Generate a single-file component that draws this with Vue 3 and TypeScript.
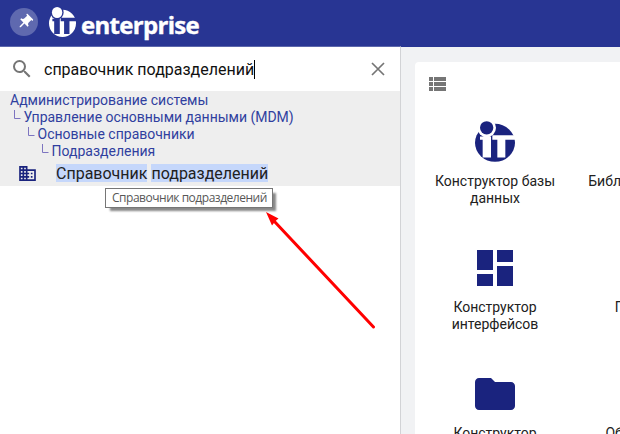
<script setup lang="ts">
interface Crumb { text: string; level: number }
interface Tile { lines: string[]; icon: 'logo' | 'dashboard' | 'folder' | 'none' }

const query = 'справочник подразделений'
const crumbs: Crumb[] = [
  { text: 'Администрирование системы', level: 0 },
  { text: 'Управление основными данными (MDM)', level: 1 },
  { text: 'Основные справочники', level: 2 },
  { text: 'Подразделения', level: 3 },
]
const matches = ['Справочник', 'подразделений']
const tiles: Tile[] = [
  { lines: ['Конструктор базы', 'данных'], icon: 'logo' },
  { lines: ['Библиотека'], icon: 'none' },
  { lines: ['Конструктор', 'интерфейсов'], icon: 'dashboard' },
  { lines: ['Пул'], icon: 'none' },
  { lines: ['Конструктор'], icon: 'folder' },
  { lines: ['Обмен'], icon: 'none' },
]
</script>

<template>
  <div class="app">
    <header class="header">
      <button class="pin" aria-label="pin">
        <svg viewBox="0 0 24 24"><path transform="rotate(45 12 12)" d="M16 9V4h1c.55 0 1-.45 1-1s-.45-1-1-1H7c-.55 0-1 .45-1 1s.45 1 1 1h1v5c0 1.660-1.340 3-3 3v2h5.970v7l1 1 1-1v-7H19v-2c-1.660 0-3-1.340-3-3z" /></svg>
      </button>
      <svg class="brand-logo" viewBox="30 31 120 125" preserveAspectRatio="none">
        <ellipse cx="90" cy="99" rx="60" ry="57" class="logo-fill" />
        <circle cx="66" cy="54" r="29" class="logo-cut" />
        <path d="M45 80H78V143H53V90H45ZM82 76H152V90H121V143H97V90H82Z" class="logo-cut" />
        <circle cx="66" cy="54" r="23" class="logo-fill" />
      </svg>
      <span class="wordmark">enterprise</span>
    </header>

    <main class="body">
      <aside class="panel">
        <div class="search">
          <svg class="glass" viewBox="3 3 18 18"><path d="M15.500 14h-.79l-.28-.27A6.470 6.470 0 0 0 16 9.500 6.500 6.500 0 1 0 9.500 16c1.610 0 3.090-.59 4.230-1.570l.27.28v.79l5 4.990L20.490 19l-4.990-5zm-6 0C7.010 14 5 11.990 5 9.500S7.010 5 9.500 5 14 7.010 14 9.500 11.990 14 9.500 14z" /></svg>
          <span class="query">{{ query }}</span><i class="caret"></i>
          <svg class="close" viewBox="0 0 14 14"><path d="M1 1L13 13M13 1L1 13" /></svg>
        </div>
        <div class="results">
          <div v-for="c in crumbs" :key="c.text" class="crumb" :class="'level-' + c.level">
            <svg v-if="c.level" class="elbow" viewBox="0 0 7 10"><path d="M.5 0V8.500H6.500" /></svg>
            <span>{{ c.text }}</span>
          </div>
          <div class="match">
            <svg class="building" viewBox="2 3 20 18"><path d="M12 7V3H2v18h20V7H12zM6 19H4v-2h2v2zm0-4H4v-2h2v2zm0-4H4V9h2v2zm0-4H4V5h2v2zm4 12H8v-2h2v2zm0-4H8v-2h2v2zm0-4H8V9h2v2zm0-4H8V5h2v2zm10 12h-8v-2h2v-2h-2v-2h2v-2h-2V9h8v10zm-2-8h-2v2h2v-2zm0 4h-2v2h2v-2z" /></svg>
            <mark v-for="m in matches" :key="m">{{ m }}</mark>
          </div>
        </div>
      </aside>

      <section class="workspace">
        <div class="card">
          <svg class="list" viewBox="0 0 17 14"><path d="M0 0H4V4H0ZM5 0H17V4H5ZM0 5H4V9H0ZM5 5H17V9H5ZM0 10H4V14H0ZM5 10H17V14H5Z" /></svg>
          <div class="grid">
            <div v-for="(t, i) in tiles" :key="i" class="tile">
              <div class="tile-icon">
                <svg v-if="t.icon === 'logo'" class="tile-logo" viewBox="30 34 120 122">
                  <ellipse cx="90" cy="99" rx="60" ry="57" class="logo-fill" />
                  <circle cx="65" cy="54" r="28" class="logo-cut" />
                  <path d="M45 80H78V143H53V90H45ZM82 76H152V90H121V143H97V90H82Z" class="logo-cut" />
                  <circle cx="65" cy="54" r="20" class="logo-fill" />
                </svg>
                <svg v-else-if="t.icon === 'dashboard'" class="tile-svg" viewBox="0 0 24 24"><path d="M3 13h8V3H3v10zm0 8h8v-6H3v6zm10 0h8V11h-8v10zm0-18v6h8V3h-8z" /></svg>
                <svg v-else-if="t.icon === 'folder'" class="tile-svg" viewBox="0 0 24 24"><path d="M10 4H4c-1.100 0-1.990.9-1.990 2L2 18c0 1.100.9 2 2 2h16c1.100 0 2-.9 2-2V8c0-1.100-.9-2-2-2h-8l-2-2z" /></svg>
              </div>
              <div v-for="l in t.lines" :key="l" class="label">{{ l }}</div>
            </div>
          </div>
        </div>
      </section>
    </main>

    <div class="tooltip">Справочник подразделений</div>
    <svg class="arrow" viewBox="0 0 112 122">
      <path class="shaft" d="M8 9L107.500 115" />
      <path class="head" d="M0 0L12.500 6.500L9.500 9L6 13.500Z" />
    </svg>
  </div>
</template>

<style>
body { overflow: hidden; }
</style>

<style scoped>
* { box-sizing: border-box; }
.app { position: relative; width: 620px; height: 434px; overflow: hidden; display: flex; flex-direction: column; font-family: Roboto, "Liberation Sans", sans-serif; background: #fff; }
.header { height: 46px; flex: none; background: #283593; display: flex; align-items: flex-start; }
.pin { width: 28px; height: 28px; margin: 8px 0 0 10px; padding: 0 0 1px 1px; border: 0; border-radius: 50%; background: #5f69af; display: flex; align-items: center; justify-content: center; }
.pin svg { width: 18px; height: 18px; fill: #fff; }
.brand-logo { width: 27px; height: 30px; margin: 7px 0 0 11px; }
.brand-logo .logo-fill { fill: #fff; }
.brand-logo .logo-cut { fill: #283593; }
.wordmark { margin: 9px 0 0 5px; font: 700 24px/32px "Open Sans", "Noto Sans", sans-serif; letter-spacing: -0.7px; color: #fff; -webkit-text-stroke: 0.4px #fff; }
.body { flex: 1; min-height: 0; display: flex; }
.panel { width: 401px; flex: none; background: #fff; border-top: 1px solid #5c67ab; border-right: 1px solid #d2d3d6; }
.search { height: 44px; display: flex; align-items: center; padding-left: 13px; }
.glass { width: 18px; height: 18px; fill: #757575; }
.query { margin-left: 13px; padding-top: 2px; font-size: 16px; line-height: 20px; white-space: nowrap; color: #111; }
.caret { width: 1px; height: 19px; background: #000; }
.close { width: 14px; height: 14px; margin-left: auto; margin-right: 15px; fill: none; stroke: #757575; stroke-width: 1.7; }
.results { height: 95px; background: #eee; padding-top: 1px; }
.crumb { height: 17px; display: flex; padding-left: 10px; font-size: 14px; line-height: 17px; white-space: nowrap; color: #303f9f; }
.level-1 { padding-left: 14px; letter-spacing: -0.02px; }
.level-2 { padding-left: 28px; }
.level-3 { padding-left: 42px; }
.elbow { width: 7px; height: 10px; margin: 1px 2.5px 0 0; fill: none; stroke: #7d74c0; }
.match { height: 26px; display: flex; align-items: center; padding-left: 19px; gap: 4px; font-size: 16px; }
.building { width: 17px; height: 15px; fill: #1a237e; margin-right: 16px; }
mark { background: #c5d7fb; color: #212121; line-height: 19px; height: 18px; }
.workspace { flex: 1; min-width: 0; background: #f1f2f4; border-top: 1px solid #283593; padding: 15px 0 0 14px; overflow: hidden; }
.card { width: 600px; height: 500px; background: #fff; border-radius: 4px 0 0 0; padding: 15px 0 0 14px; }
.list { display: block; width: 17px; height: 14px; fill: #757575; }
.grid { display: grid; grid-template-columns: 132px 132px; grid-auto-rows: 126px; margin-top: 27px; }
.tile { display: flex; flex-direction: column; align-items: center; }
.tile-icon { height: 55px; flex: none; display: flex; }
.tile-logo { width: 40px; height: 41px; margin-top: 3px; }
.tile-svg { width: 48px; height: 48px; fill: #1a237e; }
.logo-fill { fill: #1a237e; }
.logo-cut { fill: #fff; }
.label { font-size: 14px; line-height: 17px; white-space: nowrap; color: #212121; }
.tooltip { position: absolute; left: 105px; top: 188px; width: 168px; height: 20px; border: 1px solid #767676; background: #fff; color: #575757; font: 12px/18px "Open Sans", "Noto Sans", sans-serif; letter-spacing: -0.48px; padding-left: 6px; white-space: nowrap; box-shadow: 4px 4px 2px -1px #888; }
.arrow { position: absolute; left: 266px; top: 212px; width: 112px; height: 122px; }
.shaft { stroke: #f00; stroke-width: 3; stroke-linecap: round; }
.head { fill: #f00; }
</style>
